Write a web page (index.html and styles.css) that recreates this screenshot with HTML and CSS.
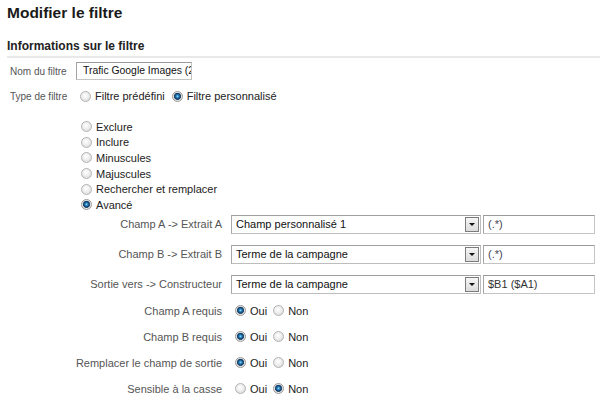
FILE: index.html
```html
<!DOCTYPE html>
<html lang="fr">
<head>
<meta charset="utf-8">
<title>Modifier le filtre</title>
<link rel="stylesheet" href="styles.css">
</head>
<body>
<div class="page">
  <h1 class="title">Modifier le filtre</h1>
  <h2 class="section">Informations sur le filtre</h2>

  <div class="row name-row">
    <span class="lbl">Nom du filtre</span>
    <div class="field name-field">Trafic Google Images (2010)</div>
  </div>

  <div class="row type-row">
    <span class="lbl">Type de filtre</span>
    <label class="opt"><input type="radio" name="type"> Filtre prédéfini</label>
    <label class="opt"><input type="radio" name="type" checked> Filtre personnalisé</label>
  </div>

  <ul class="kinds">
    <li><label class="opt"><input type="radio" name="kind"> Exclure</label></li>
    <li><label class="opt"><input type="radio" name="kind"> Inclure</label></li>
    <li><label class="opt"><input type="radio" name="kind"> Minuscules</label></li>
    <li><label class="opt"><input type="radio" name="kind"> Majuscules</label></li>
    <li><label class="opt"><input type="radio" name="kind"> Rechercher et remplacer</label></li>
    <li><label class="opt"><input type="radio" name="kind" checked> Avancé</label></li>
  </ul>

  <div class="adv selects">
    <span class="alabel">Champ A -&gt; Extrait A</span>
    <div class="ctrl">
      <div class="select"><span class="sel-val">Champ personnalisé 1</span><span class="sel-btn"></span></div>
      <div class="field expr">(.*)</div>
    </div>

    <span class="alabel">Champ B -&gt; Extrait B</span>
    <div class="ctrl">
      <div class="select"><span class="sel-val">Terme de la campagne</span><span class="sel-btn"></span></div>
      <div class="field expr">(.*)</div>
    </div>

    <span class="alabel">Sortie vers -&gt; Constructeur</span>
    <div class="ctrl">
      <div class="select"><span class="sel-val">Terme de la campagne</span><span class="sel-btn"></span></div>
      <div class="field expr dark">$B1 ($A1)</div>
    </div>
  </div>

  <div class="adv toggles">
    <span class="alabel">Champ A requis</span>
    <div class="ctrl radios">
      <label class="opt"><input type="radio" name="ra" checked> Oui</label>
      <label class="opt"><input type="radio" name="ra"> Non</label>
    </div>

    <span class="alabel">Champ B requis</span>
    <div class="ctrl radios">
      <label class="opt"><input type="radio" name="rb" checked> Oui</label>
      <label class="opt"><input type="radio" name="rb"> Non</label>
    </div>

    <span class="alabel">Remplacer le champ de sortie</span>
    <div class="ctrl radios">
      <label class="opt"><input type="radio" name="rc" checked> Oui</label>
      <label class="opt"><input type="radio" name="rc"> Non</label>
    </div>

    <span class="alabel">Sensible à la casse</span>
    <div class="ctrl radios">
      <label class="opt"><input type="radio" name="rd"> Oui</label>
      <label class="opt"><input type="radio" name="rd" checked> Non</label>
    </div>
  </div>
</div>
</body>
</html>
```

FILE: styles.css
```css
* { box-sizing: border-box; }

body {
  margin: 0;
  background: #fff;
  color: #222;
  font-family: "Liberation Sans", Arial, sans-serif;
  font-size: 11px;
}

.page {
  padding: 4px 0 0 7px;
}

.title {
  margin: 0;
  font-size: 15.5px;
  line-height: 18px;
  font-weight: bold;
  color: #1a1a1a;
}

.section {
  margin: 17px 0 0;
  font-size: 12px;
  line-height: 14px;
  font-weight: bold;
  color: #222;
  padding-bottom: 3px;
  border-bottom: 2px solid #e9e9e9;
}

.row {
  display: flex;
  align-items: center;
  height: 18px;
}

.name-row { margin-top: 4px; }
.type-row { margin-top: 7px; }

.lbl {
  width: 69px;
  padding-left: 3px;
  color: #555;
  font-size: 10px;
}

.type-row .lbl { width: 73px; }

.field {
  height: 18px;
  line-height: 16px;
  padding: 0 4px;
  border: 1px solid #c4c4c4;
  border-top-color: #9a9a9a;
  border-left-color: #a5a5a5;
  background: #fff;
  color: #111;
  font-size: 11px;
  white-space: nowrap;
  overflow: hidden;
}

.name-field {
  width: 116px;
  padding-left: 6px;
  font-size: 10.4px;
}

.opt {
  display: inline-flex;
  align-items: center;
  gap: 4px;
  color: #222;
  font-size: 11px;
  margin-right: 7px;
}

input[type="radio"] {
  -webkit-appearance: none;
  appearance: none;
  width: 11px;
  height: 11px;
  margin: 0;
  border-radius: 50%;
  border: 1px solid #b3b3b3;
  background: radial-gradient(circle at 45% 40%, #ffffff 0, #f2f2f2 35%, #d4d4d4 100%);
  flex: none;
}

input[type="radio"]:checked {
  border-color: #9a9a9a;
  background: radial-gradient(circle at 50% 48%, #9fd8f5 0, #2a88c4 1.3px, #0c3d6b 2.8px, #36506a 3.3px, #e6e6e6 3.9px, #d0d0d0 100%);
}

.kinds {
  list-style: none;
  margin: 14px 0 0;
  padding: 0 0 0 74px;
}

.kinds li {
  height: 15.6px;
  display: flex;
  align-items: center;
}

.adv {
  display: grid;
  grid-template-columns: 215px auto;
  column-gap: 9px;
  align-items: center;
}

.selects {
  margin-top: 2px;
  row-gap: 11px;
}

.alabel {
  text-align: right;
  color: #555;
  font-size: 11px;
  white-space: nowrap;
}

.ctrl {
  display: flex;
  align-items: center;
  gap: 2px;
}

.select {
  width: 250px;
  height: 19px;
  display: flex;
  align-items: center;
  justify-content: space-between;
  border: 1px solid #bdbdbd;
  border-top-color: #a0a0a0;
  border-left-color: #a8a8a8;
  padding: 1px;
  background: #fff;
}

.sel-val {
  padding-left: 3px;
  color: #111;
  font-size: 11px;
  white-space: nowrap;
}

.sel-btn {
  position: relative;
  width: 14px;
  height: 15px;
  border: 1px solid #7c7c7c;
  background: linear-gradient(#f5f5f5, #dcdcdc);
}

.sel-btn::after {
  content: "";
  position: absolute;
  left: 3px;
  top: 5px;
  border-left: 3px solid transparent;
  border-right: 3px solid transparent;
  border-top: 3px solid #111;
}

.expr {
  width: 112px;
  height: 19px;
  color: #445;
}

.expr.dark { color: #333; }

.toggles {
  margin-top: 9px;
  row-gap: 10px;
}

.toggles .alabel,
.toggles .ctrl {
  height: 16px;
  line-height: 16px;
}

.radios {
  padding-left: 4px;
  gap: 0;
}

.radios .opt { margin-right: 6px; }
```
